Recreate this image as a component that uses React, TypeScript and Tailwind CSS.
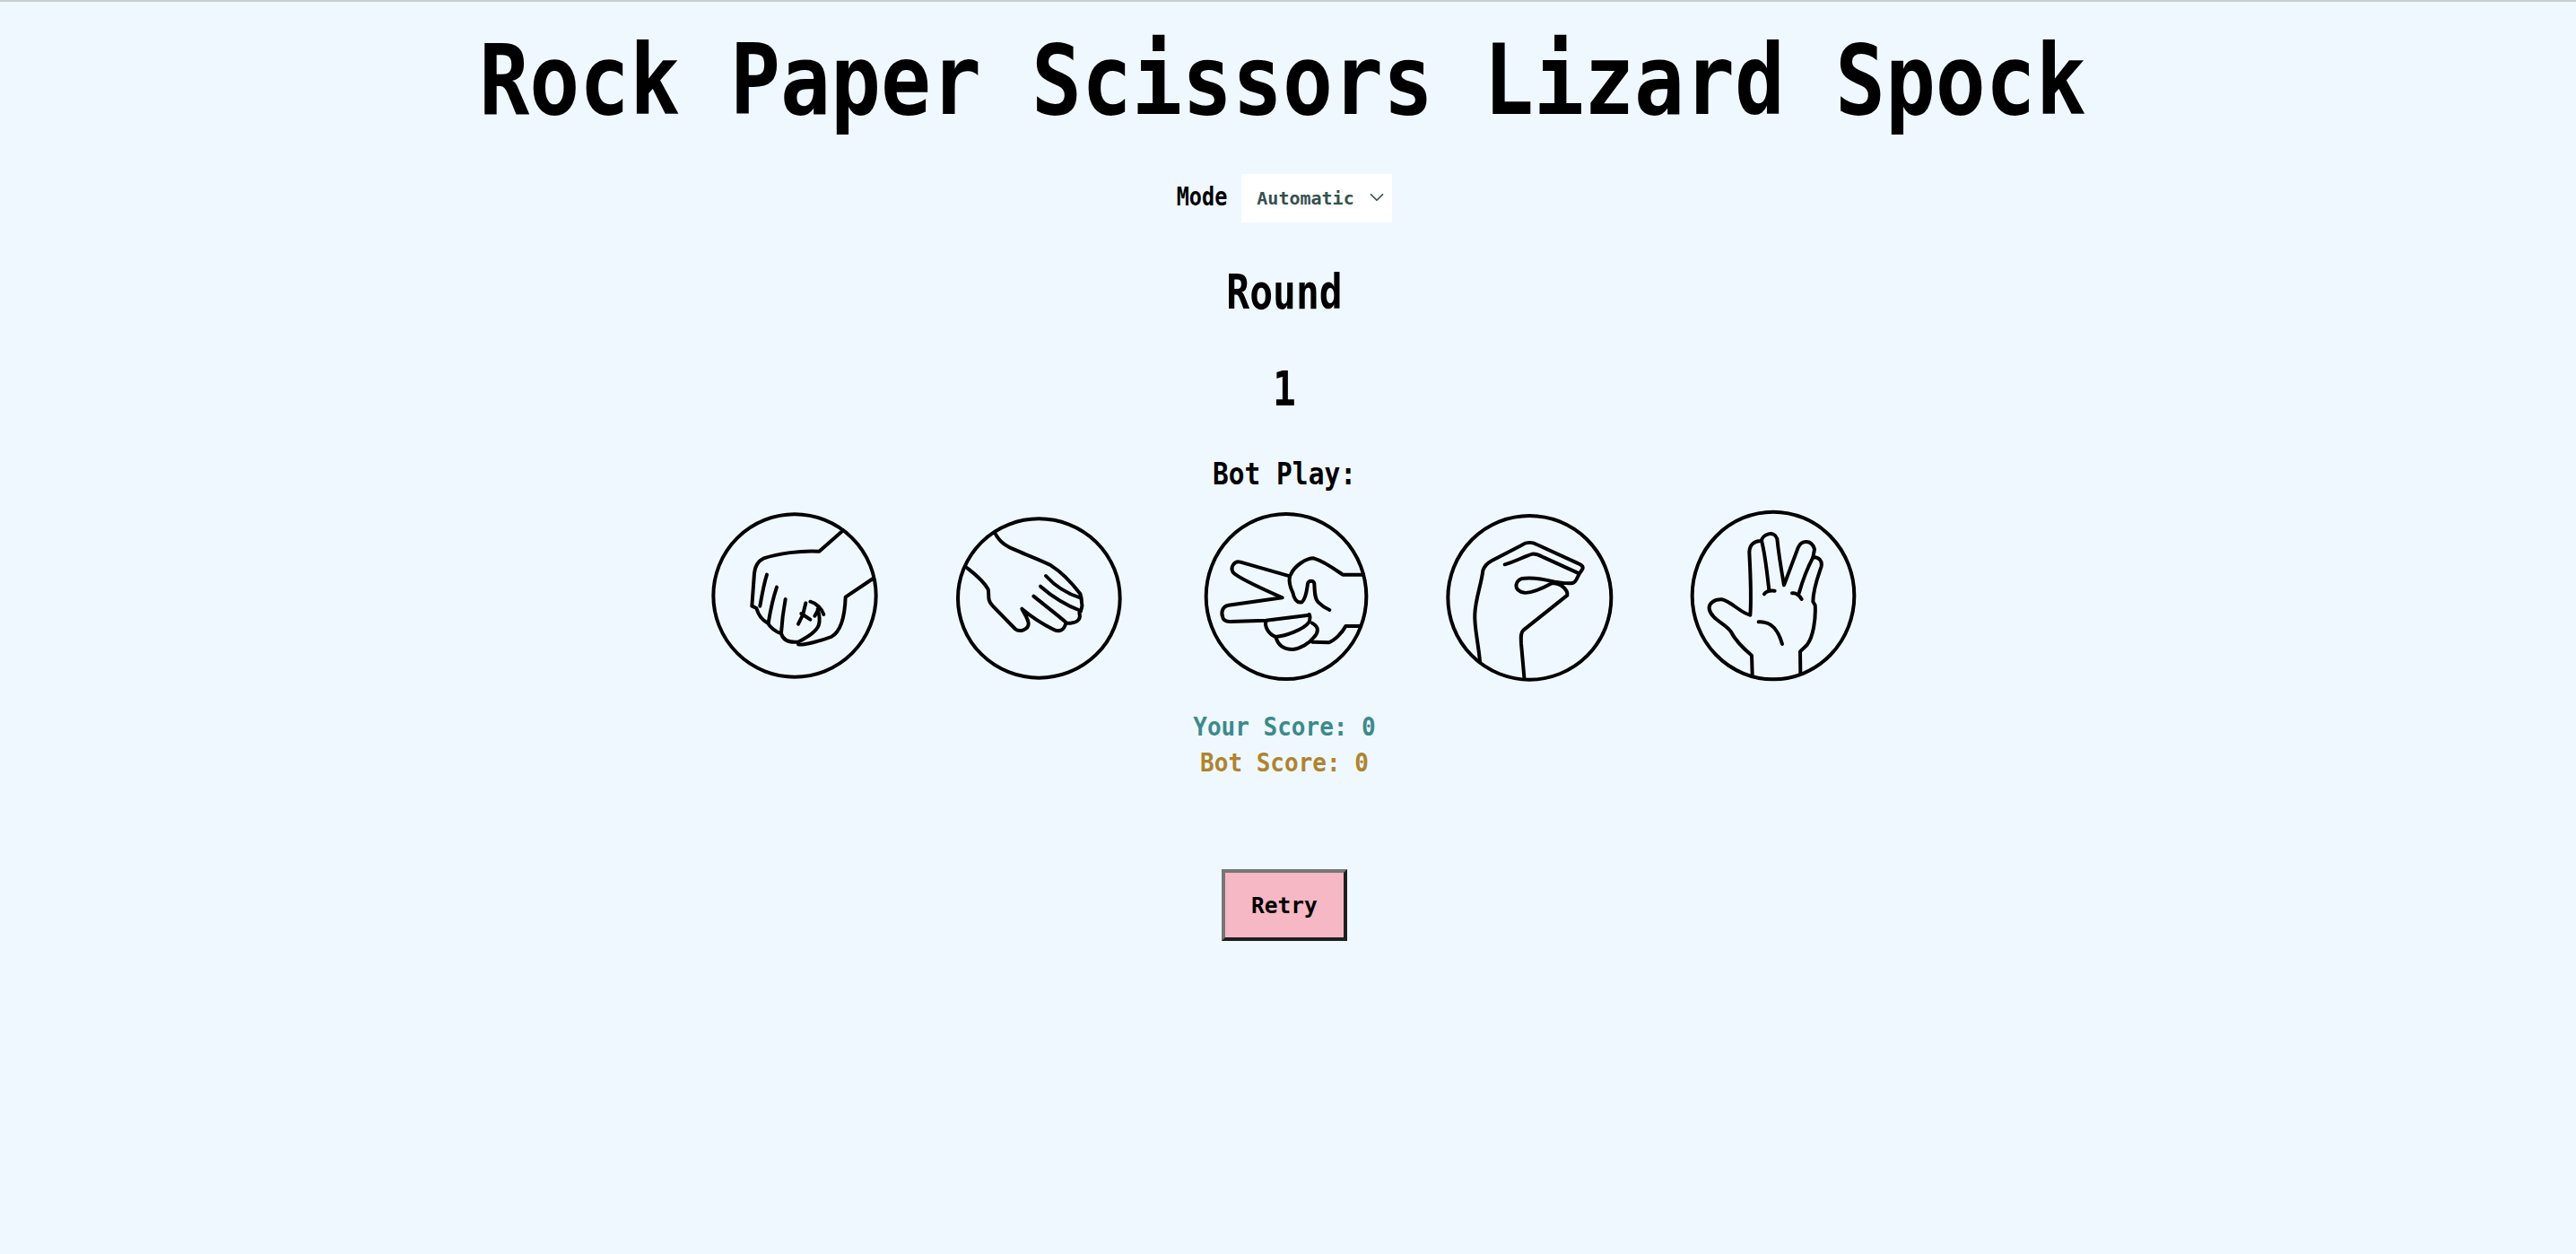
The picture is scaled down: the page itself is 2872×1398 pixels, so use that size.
import { ChevronDown } from "lucide-react";

const mono = "font-['DejaVu_Sans_Mono','Liberation_Mono',monospace]";

function Hand({ box, children }: { box: string; children: React.ReactNode }) {
  return (
    <svg
      viewBox={box}
      className="w-[186px] h-[192px] shrink-0 overflow-visible"
      fill="none"
      stroke="#000"
      strokeWidth={12}
      strokeLinecap="round"
      strokeLinejoin="round"
    >
      {children}
    </svg>
  );
}

function Rock() {
  return (
    <Hand box="75 55 558 576">
      <ellipse cx="348" cy="340" rx="272" ry="272" />
      <path d="M510 122 L430 192 C370 188 290 200 245 215 C225 225 215 245 213 265 L205 375 L220 382 C225 400 235 420 258 432 C265 445 285 462 303 467 C310 490 330 498 360 495" />
      <path d="M360 503 C375 508 440 490 470 478 C495 465 515 430 518 345 L610 283" />
      <path d="M255 270 C245 300 238 340 232 375 M288 312 C275 350 265 400 260 432 M317 352 C310 390 305 430 303 465" />
      <path d="M360 495 C390 480 420 460 428 440 C435 420 428 395 425 385" />
      <path d="M400 360 C420 365 440 385 445 403 M428 385 L415 408 M385 365 L375 405 L360 435 M370 400 L400 420" />
    </Hand>
  );
}

function Paper() {
  return (
    <Hand box="891 56 558 576">
      <ellipse cx="1165" cy="350" rx="271" ry="266" />
      <path d="M1018 132 C1035 165 1060 178 1090 190 C1130 208 1170 222 1205 240 C1240 262 1280 305 1303 335 C1308 350 1308 355 1308 365 C1312 375 1305 395 1300 398 C1305 415 1300 430 1270 433 L1255 433 C1250 455 1235 465 1215 455 C1185 440 1140 412 1108 385 C1115 400 1130 420 1130 435 C1130 455 1100 465 1085 452 L1010 375 C990 355 1000 340 995 320 C975 285 945 265 920 245" />
      <path d="M1188 275 C1220 310 1260 335 1303 348 M1170 310 C1210 345 1260 375 1305 392 M1147 343 C1180 370 1220 400 1255 430" />
    </Hand>
  );
}

function Scissors() {
  return (
    <Hand box="118 55 558 576">
      <ellipse cx="403" cy="343" rx="268" ry="276" />
      <path d="M660 270 L592 270 C570 255 530 225 495 215 C470 215 430 240 418 270 L415 275 L250 228 C230 222 215 245 225 262 C240 280 340 325 390 347 L210 372 C190 375 185 395 190 410 C192 425 205 427 215 427 L335 423 L480 405" />
      <path d="M335 425 C330 445 345 470 368 478 C400 475 460 455 480 428 C482 420 485 410 480 403" />
      <path d="M368 478 C375 505 395 520 425 520 C450 518 480 500 495 480 C510 465 515 445 490 432" />
      <path d="M490 495 L545 497 C565 490 590 465 602 442 L652 442" />
      <path d="M415 275 C410 300 420 320 425 330 C430 355 440 365 455 362 C470 350 472 320 475 300 C478 288 495 288 497 300 C498 325 498 350 510 362 C520 372 535 382 548 388" />
    </Hand>
  );
}

function Lizard() {
  return (
    <Hand box="933 54 558 576">
      <ellipse cx="1216" cy="346" rx="273" ry="274" />
      <path d="M1050 560 C1045 500 1030 440 1033 400 C1035 350 1055 300 1060 255 C1065 240 1075 230 1090 222 L1190 170 C1205 160 1225 160 1240 168 L1375 230 C1395 238 1398 245 1390 255 C1375 270 1375 295 1360 297 C1340 300 1320 295 1300 293 C1260 283 1220 277 1190 282 C1170 290 1165 310 1180 322 C1200 340 1250 320 1290 298 C1320 295 1345 320 1342 338 L1195 455 C1185 465 1187 480 1188 500 L1198 612" />
      <path d="M1133 235 C1160 228 1195 210 1225 200 C1240 198 1250 205 1265 212 L1375 262" />
    </Hand>
  );
}

function Spock() {
  return (
    <Hand box="910 55 558 576">
      <ellipse cx="1192" cy="340" rx="271" ry="280" />
      <path d="M1122 605 L1120 540 C1090 515 1065 490 1050 460 C1035 435 985 420 978 385 C975 365 995 352 1020 353 C1050 358 1085 400 1115 405 C1120 340 1115 260 1112 195 C1112 170 1130 155 1153 157 C1155 135 1195 120 1205 150 C1210 200 1220 260 1228 305 L1275 180 C1285 155 1320 150 1330 185 L1325 212 C1345 210 1358 225 1352 245 C1340 280 1325 320 1325 360 L1332 372 C1335 420 1325 480 1305 505 L1282 527 L1283 600" />
      <path d="M1153 157 C1165 200 1172 270 1178 322 M1162 335 C1168 325 1180 322 1197 324 M1325 212 C1305 250 1290 290 1278 332 M1255 332 C1270 330 1280 340 1287 352 M1143 428 C1190 425 1210 460 1222 502" />
    </Hand>
  );
}

export default function App() {
  return (
    <div className={`${mono} min-h-[1398px] bg-[#f0f8ff] text-black border-t-2 border-[#c8ced0] pr-[8px] flex flex-col items-center`}>
      <h1 className="text-[93px] leading-[110px] font-bold mt-[33px] whitespace-nowrap scale-y-[1.16] -translate-x-[2px]">
        Rock Paper Scissors Lizard Spock
      </h1>
      <div className="flex items-center gap-[16px] mt-[49px] h-[54px]">
        <label className="text-[23.5px] font-bold scale-y-[1.2]">Mode</label>
        <div className="relative w-[168px] h-[54px]">
          <select className="appearance-none w-full h-full bg-white text-[#35504f] text-[20px] font-bold pl-[17px] outline-none">
            <option>Automatic</option>
          </select>
          <ChevronDown className="absolute right-[4px] top-[13px] w-[26px] h-[26px] text-[#35504f] pointer-events-none" strokeWidth={1.6} />
        </div>
      </div>
      <h2 className="text-[43px] leading-[50px] font-bold mt-[52px] scale-y-[1.25]">Round</h2>
      <div className="text-[43px] leading-[50px] font-bold mt-[58px] scale-y-[1.25]">1</div>
      <div className="text-[29.5px] leading-[36px] font-bold mt-[53px] scale-y-[1.15]">Bot Play:</div>
      <div className="flex gap-[86px] mt-[22px]">
        <Rock />
        <Paper />
        <Scissors />
        <Lizard />
        <Spock />
      </div>
      <div className="text-[26px] leading-[40px] font-bold text-[#3b8a8c] mt-[29px] scale-y-[1.1]">Your Score: 0</div>
      <div className="text-[26px] leading-[40px] font-bold text-[#ae842e] scale-y-[1.1]">Bot Score: 0</div>
      <button className="w-[140px] h-[80px] mt-[99px] pt-[2px] bg-[#f5b8c4] border-[4px] border-t-[#767676] border-l-[#767676] border-r-[#1f1f1f] border-b-[#1f1f1f] text-[24.5px] font-bold">
        Retry
      </button>
    </div>
  );
}
